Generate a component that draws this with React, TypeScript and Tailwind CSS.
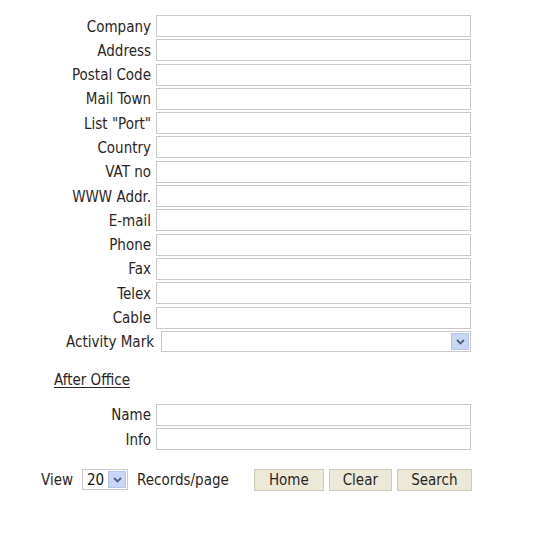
import React from "react"

const fields = [
  "Company",
  "Address",
  "Postal Code",
  "Mail Town",
  'List "Port"',
  "Country",
  "VAT no",
  "WWW Addr.",
  "E-mail",
  "Phone",
  "Fax",
  "Telex",
  "Cable",
]

function Chevron() {
  return (
    <svg width="9" height="6" viewBox="0 0 9 6">
      <path d="M1 1 L4.5 4.5 L8 1" fill="none" stroke="#4d6185" strokeWidth="1.8" />
    </svg>
  )
}

function FieldRow({ label }: { label: string }) {
  return (
    <div className="flex items-center h-[22px]">
      <label className="w-[151px] shrink-0 text-right leading-none pt-[2px]">{label}</label>
      <input
        type="text"
        className="ml-[5px] w-[315px] h-[22px] border border-[#c9c9c9] bg-white outline-none"
      />
    </div>
  )
}

export default function App() {
  return (
    <div
      className="w-[543px] h-[533px] bg-white text-[15px] text-[#2b2526]"
      style={{ fontFamily: '"DejaVu Sans Condensed", "DejaVu Sans", Tahoma, sans-serif', fontStretch: "condensed" }}
    >
      <div className="pt-[15px] flex flex-col gap-[2.3px]">
        {fields.map((f) => (
          <FieldRow key={f} label={f} />
        ))}
        {/* Activity mark dropdown */}
        <div className="flex items-center h-[22px]">
          <label className="w-[154px] shrink-0 text-right leading-none pt-[2px]">Activity Mark</label>
          <div className="ml-[7px] w-[310px] h-[21px] border border-[#c9c9c9] bg-white flex justify-end items-center pr-[1px]">
            <div className="w-[18px] h-[17px] bg-[#c9d6f5] border border-[#b4c4ee] flex items-center justify-center">
              <Chevron />
            </div>
          </div>
        </div>
      </div>

      <div className="mt-[16px] pl-[54px] leading-[22px]">
        <span className="underline underline-offset-2">After Office</span>
      </div>

      <div className="mt-[13px] flex flex-col gap-[2.3px]">
        <FieldRow label="Name" />
        <FieldRow label="Info" />
      </div>

      <div className="mt-[18px] flex items-center h-[23px] pl-[41px] leading-none">
        <span className="pt-[2px]">View</span>
        <div className="ml-[9px] w-[46px] h-[21px] border border-[#c9c9c9] bg-white flex items-center justify-between pl-[4px] pr-[1px]">
          <span className="text-[#111] pt-[1px]">20</span>
          <div className="w-[18px] h-[17px] bg-[#c9d6f5] border border-[#b4c4ee] flex items-center justify-center">
            <Chevron />
          </div>
        </div>
        <span className="ml-[9px] pt-[2px]">Records/page</span>
        <div className="ml-[25px] flex gap-[5px]">
          <button className="w-[70px] h-[22px] bg-[#ece9d8] border border-[#cfcbbb] pt-[1px]">Home</button>
          <button className="w-[63px] h-[22px] bg-[#ece9d8] border border-[#cfcbbb] pt-[1px]">Clear</button>
          <button className="w-[75px] h-[22px] bg-[#ece9d8] border border-[#cfcbbb] pt-[1px]">Search</button>
        </div>
      </div>
    </div>
  )
}
